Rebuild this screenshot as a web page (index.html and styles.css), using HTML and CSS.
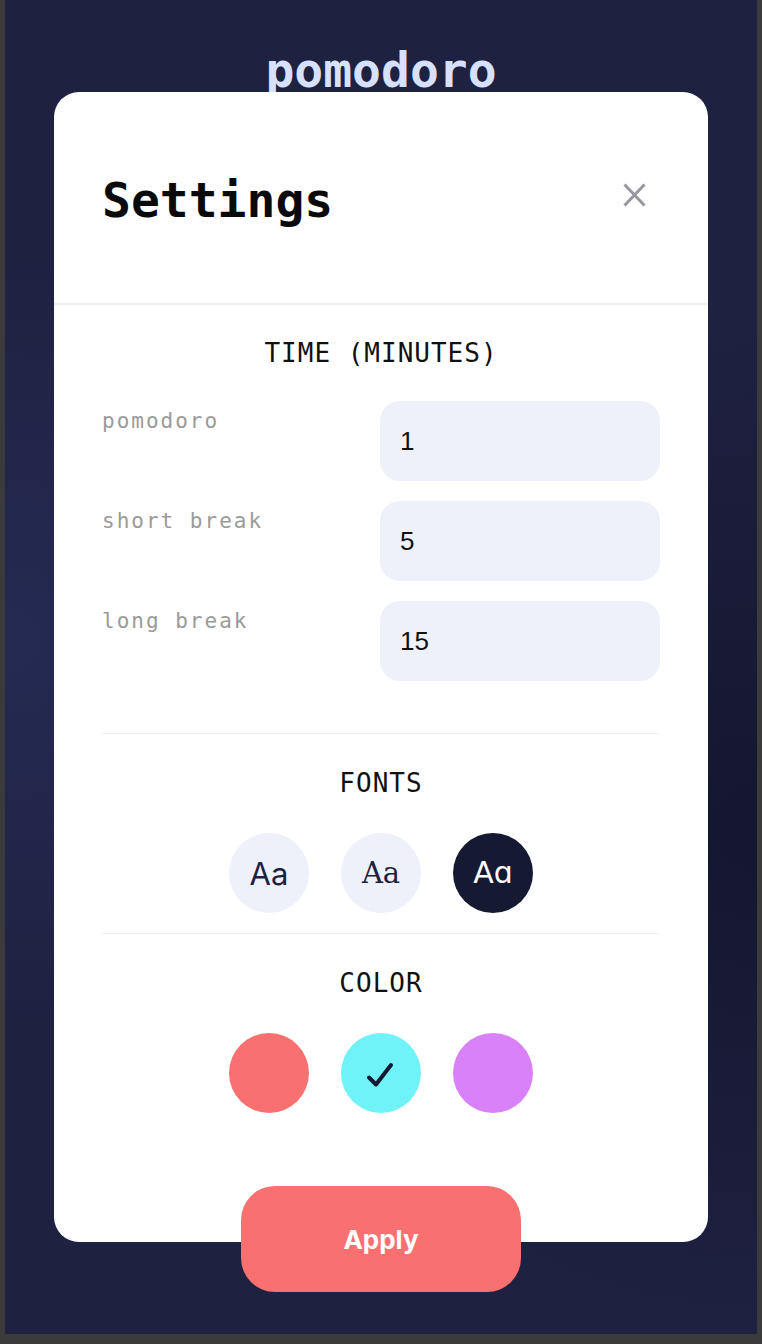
FILE: index.html
```html
<!DOCTYPE html>
<html lang="en">
<head>
<meta charset="utf-8">
<title>pomodoro – Settings</title>
<link rel="stylesheet" href="styles.css">
</head>
<body>
<div class="screen">
  <h1 class="logo">pomodoro</h1>
  <section class="card">
    <header class="card-header">
      <h2 class="card-title">Settings</h2>
      <button class="close" type="button" aria-label="Close settings">
        <svg width="23" height="24" viewBox="0 0 23 24" aria-hidden="true">
          <path d="M1.5 1.5 L21.5 22.5 M21.5 1.5 L1.5 22.5" stroke="#97989f" stroke-width="3" fill="none"/>
        </svg>
      </button>
    </header>
    <div class="card-body">
      <div class="section section-time">
        <h3 class="section-title">TIME (MINUTES)</h3>
        <div class="rows">
          <label class="row"><span class="row-label">pomodoro</span><input class="row-input" type="text" value="1"></label>
          <label class="row"><span class="row-label">short break</span><input class="row-input" type="text" value="5"></label>
          <label class="row"><span class="row-label">long break</span><input class="row-input" type="text" value="15"></label>
        </div>
      </div>
      <div class="section section-sub section-fonts">
        <h3 class="section-title">FONTS</h3>
        <div class="options">
          <button class="option font-opt font-sans" type="button">Aa</button>
          <button class="option font-opt font-serif" type="button">Aa</button>
          <button class="option font-opt font-alt is-active" type="button">Aɑ</button>
        </div>
      </div>
      <div class="section section-sub section-color">
        <h3 class="section-title">COLOR</h3>
        <div class="options">
          <button class="option swatch swatch-red" type="button" aria-label="Red"></button>
          <button class="option swatch swatch-cyan is-active" type="button" aria-label="Cyan">
            <svg width="32" height="32" viewBox="-16 -16 32 32" aria-hidden="true">
              <polyline points="-12,4.5 -5,11.5 10,-8" fill="none" stroke="#161932" stroke-width="4" stroke-linecap="round" stroke-linejoin="round"/>
            </svg>
          </button>
          <button class="option swatch swatch-violet" type="button" aria-label="Violet"></button>
        </div>
      </div>
    </div>
    <button class="apply" type="button">Apply</button>
  </section>
</div>
</body>
</html>
```

FILE: styles.css
```css
* {
  box-sizing: border-box;
}

html, body {
  margin: 0;
  padding: 0;
}

body {
  background: #3b3b3b;
  width: 762px;
  height: 1344px;
  overflow: hidden;
}

.screen {
  margin-left: 5px;
  width: 752px;
  height: 1334px;
  padding-top: 52px;
  background:
    radial-gradient(circle at 0% 48%, rgba(44, 50, 100, 0.55) 0%, rgba(30, 33, 64, 0) 38%),
    radial-gradient(circle at 100% 62%, rgba(15, 17, 38, 0.65) 0%, rgba(30, 33, 64, 0) 45%),
    #1e2140;
  display: flex;
  flex-direction: column;
  align-items: center;
}

.logo {
  margin: 0 0 4px;
  font-family: "DejaVu Sans Mono", "Liberation Mono", monospace;
  font-weight: 700;
  font-size: 48px;
  line-height: 36px;
  color: #d7e0ff;
  text-align: center;
}

.card {
  position: relative;
  width: 654px;
  background: #ffffff;
  border-radius: 25px;
  display: flex;
  flex-direction: column;
  align-items: center;
}

.card-header {
  width: 100%;
  height: 213px;
  padding: 5px 48px 0;
  border-bottom: 2px solid #eff0f2;
  display: flex;
  align-items: center;
  justify-content: space-between;
}

.card-title {
  margin: 0;
  font-family: "DejaVu Sans Mono", "Liberation Mono", monospace;
  font-weight: 700;
  font-size: 48px;
  line-height: 48px;
  color: #0a0a0a;
}

.close {
  margin: 0 14px 10px 0;
  padding: 0;
  border: none;
  background: none;
  width: 23px;
  height: 24px;
  display: flex;
}

.card-body {
  width: 100%;
  padding: 0 48px;
}

.section {
  display: flex;
  flex-direction: column;
}

.section-title {
  margin: 0;
  font-family: "DejaVu Sans Mono", "Liberation Mono", monospace;
  font-weight: 400;
  font-size: 26px;
  line-height: 32px;
  letter-spacing: 1px;
  color: #111111;
  text-align: center;
}

.section-time {
  padding: 32px 0 52px;
}

.section-time .section-title {
  margin-bottom: 32px;
}

.section-sub {
  border-top: 1px solid #efeff1;
  padding-top: 33px;
}

.section-sub .section-title {
  margin-bottom: 34px;
}

.section-fonts {
  padding-bottom: 20px;
}

.rows {
  display: flex;
  flex-direction: column;
  gap: 20px;
}

.row {
  display: flex;
  justify-content: space-between;
  align-items: flex-start;
}

.row-label {
  padding-top: 6px;
  font-family: "DejaVu Sans Mono", "Liberation Mono", monospace;
  font-size: 21px;
  line-height: 28px;
  letter-spacing: 2px;
  color: #9a9a9a;
}

.row-input {
  width: 280px;
  height: 80px;
  border: none;
  border-radius: 20px;
  background: #eef1fa;
  padding: 0 20px;
  font-family: "Liberation Sans", Arial, sans-serif;
  font-size: 26px;
  color: #111111;
  outline: none;
}

.options {
  display: flex;
  justify-content: center;
  gap: 32px;
}

.option {
  width: 80px;
  height: 80px;
  border-radius: 50%;
  border: none;
  padding: 0;
  display: flex;
  align-items: center;
  justify-content: center;
}

.font-opt {
  background: #eef1fa;
  color: #1e2140;
  font-size: 31px;
  line-height: 1;
}

.font-sans {
  font-family: "Inter", "Lato", sans-serif;
  font-weight: 400;
}

.font-serif {
  font-family: "DejaVu Serif", "Liberation Serif", serif;
  font-weight: 400;
  font-size: 29px;
}

.font-alt {
  font-family: "DejaVu Sans", sans-serif;
  font-weight: 400;
  font-size: 30px;
}

.font-opt.is-active {
  background: #161932;
  color: #ffffff;
}

.swatch-red {
  background: #f87070;
}

.swatch-cyan {
  background: #70f3f8;
}

.swatch-violet {
  background: #d881f8;
}

.apply {
  margin: 73px 0 -50px;
  width: 280px;
  height: 106px;
  border: none;
  border-radius: 34px;
  background: #f87070;
  color: #ffffff;
  font-family: "Inter", "Liberation Sans", sans-serif;
  font-weight: 700;
  font-size: 26px;
}
```
